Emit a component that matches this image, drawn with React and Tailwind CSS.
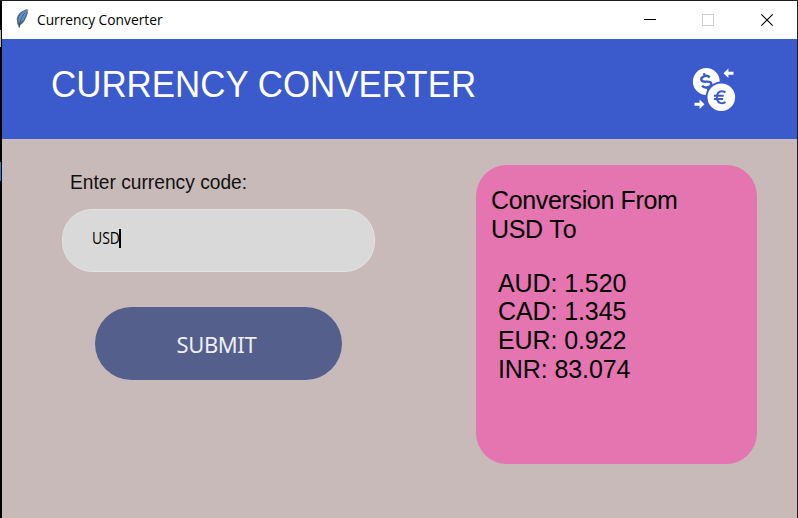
import React from "react";

const arial = "font-['Liberation_Sans',Arial,sans-serif]";
const rates = ["AUD: 1.520", "CAD: 1.345", "EUR: 0.922", "INR: 83.074"];

function Feather() {
  return (
    <svg width="14" height="20" viewBox="0 0 14 20" className="mt-[8px] ml-[13px] shrink-0">
      <path d="M11.500 0.500 C7 1.500 2.600 4.500 1.900 9.500 L2.200 14.500 L4.200 19 L5.500 15.800 C8.800 14.500 11.500 9 12.600 4 Z" fill="#596673" />
      <path d="M10.800 1.500 C7 2.700 3.600 6 3.200 13 L6.800 12.500 C9.500 10 11 6 11.600 2.600 Z" fill="#5795d8" />
      <path d="M10 3.500 C7 7.500 5.300 10 4.200 18.500" fill="none" stroke="#28486e" strokeWidth="0.700" />
      <path d="M10 0.900 L12.700 0.800 L12.100 5 M2.500 8 L2 11" fill="none" stroke="#777" strokeWidth="0.800" />
    </svg>
  );
}

function TitleBar() {
  return (
    <div className="flex h-[38px] bg-white">
      <Feather />
      <div className="ml-[8px] mt-[7px] h-[22px] w-[590px] shrink-0 origin-left scale-x-[0.918] whitespace-nowrap font-['Open_Sans','Noto_Sans',sans-serif] text-[15px] leading-[22px] text-black">
        Currency Converter
      </div>
      <svg width="168" height="38" viewBox="627 1 168 38" className="shrink-0" fill="none">
        <path d="M644 19.500h12" stroke="#000" />
        <rect x="702.500" y="14.500" width="11" height="11" stroke="#ccc" />
        <path d="M761.300 14.300l11.400 11.400M772.700 14.300l-11.400 11.400" stroke="#000" strokeWidth="1.100" />
      </svg>
    </div>
  );
}

function ExchangeIcon() {
  return (
    <svg width="44" height="44" viewBox="692 68 44 44" className="mt-[29px] shrink-0">
      <circle cx="706.300" cy="81.500" r="13.400" fill="#fff" />
      <g transform="rotate(-14 706 81.500)">
        <path
          d="M710.500 78.600c-.9-2-2.500-2.800-4.500-2.700-2.400.1-4.100 1.200-4.100 3 0 4 8.700 1.700 8.700 5.500 0 2-2 3.100-4.400 3.100-2.400 0-4.200-.9-5-2.900M706 73v2.900M706.200 87v3"
          fill="none"
          stroke="#3b5bcc"
          strokeWidth="2.400"
        />
      </g>
      <circle cx="721.300" cy="97.200" r="15.700" fill="#3b5bcc" />
      <circle cx="721.300" cy="97.200" r="13.800" fill="#fff" />
      <path
        d="M725.500 92.300c-4.700-2.500-8.700-.3-8.700 4.900s4.100 7.400 8.700 4.900M713.900 95.700h9.800M713.900 98.900h9.200"
        fill="none"
        stroke="#3b5bcc"
        strokeWidth="2"
      />
      <path d="M723.500 73.300l4.900-4.700v3.200h5.100v3h-5.100v3.200z" fill="#fff" />
      <path d="M704.500 104.200l-4.900-4.700v3.200h-5.100v3h5.100v3.200z" fill="#fff" />
    </svg>
  );
}

export default function App() {
  return (
    <div className="flex h-[518px] w-[798px] overflow-hidden bg-[#202024] pt-px">
      <div className="flex h-[517px] w-[2px] shrink-0 flex-col bg-black">
        <div className="mt-[29px] h-[17px] w-px bg-[#bdb5ae]" />
        <div className="mt-[115px] h-[19px] w-px bg-[#1686d9]" />
      </div>
      <div className="flex h-[517px] w-[795px] shrink-0 flex-col bg-[#c8bab8]">
        <TitleBar />
        <header className="flex h-[100px] bg-[#3b5bcc]">
          <h1 className={`${arial} ml-[49px] mt-[26px] w-[641px] shrink-0 origin-left scale-x-[0.969] whitespace-nowrap text-[36px] leading-[40px] text-white`}>
            CURRENCY CONVERTER
          </h1>
          <ExchangeIcon />
        </header>
        <main className="flex flex-1">
          <section className="w-[473px] pl-[60px]">
            <label className={`${arial} ml-[8px] mt-[31px] block h-[24px] w-[240px] origin-left scale-x-[0.914] whitespace-nowrap text-[21px] leading-[24px] text-[#111]`}>
              Enter currency code:
            </label>
            <div className="mt-[15px] flex h-[63px] w-[313px] rounded-[30px] border border-[#e3e1e1] bg-[#d9d9d9] pl-[29px] pt-[17px]">
              <span className="w-[27px] origin-left scale-x-[0.9] whitespace-nowrap font-['Open_Sans','Noto_Sans',sans-serif] text-[15.500px] leading-[22px] text-black">
                USD
              </span>
              <span className="mt-[2px] h-[19px] w-[2px] shrink-0 bg-black" />
            </div>
            <button className="ml-[33.400px] mt-[35.400px] flex h-[73px] w-[247px] items-center justify-center rounded-[37px] bg-[#545f8b] pr-[5px] font-['Noto_Sans',sans-serif] text-[22px] leading-[30px] tracking-[-0.4px] text-[#eeeef4]">
              SUBMIT
            </button>
          </section>
          <section className={`${arial} ml-[0.500px] mt-[26.300px] h-[299px] w-[281.500px] rounded-[31px] bg-[#e575b0] pl-[15.500px] pt-[21px] text-[25px] leading-[28.700px] text-black`}>
            <div className="tracking-[-0.35px]">
              Conversion From
              <br />
              USD <span className="tracking-[0.8px]">To</span>
            </div>
            <div className="ml-[7px] mt-[25px] tracking-[-0.1px]">
              {rates.map((rate) => (
                <div key={rate}>{rate}</div>
              ))}
            </div>
          </section>
        </main>
      </div>
    </div>
  );
}
